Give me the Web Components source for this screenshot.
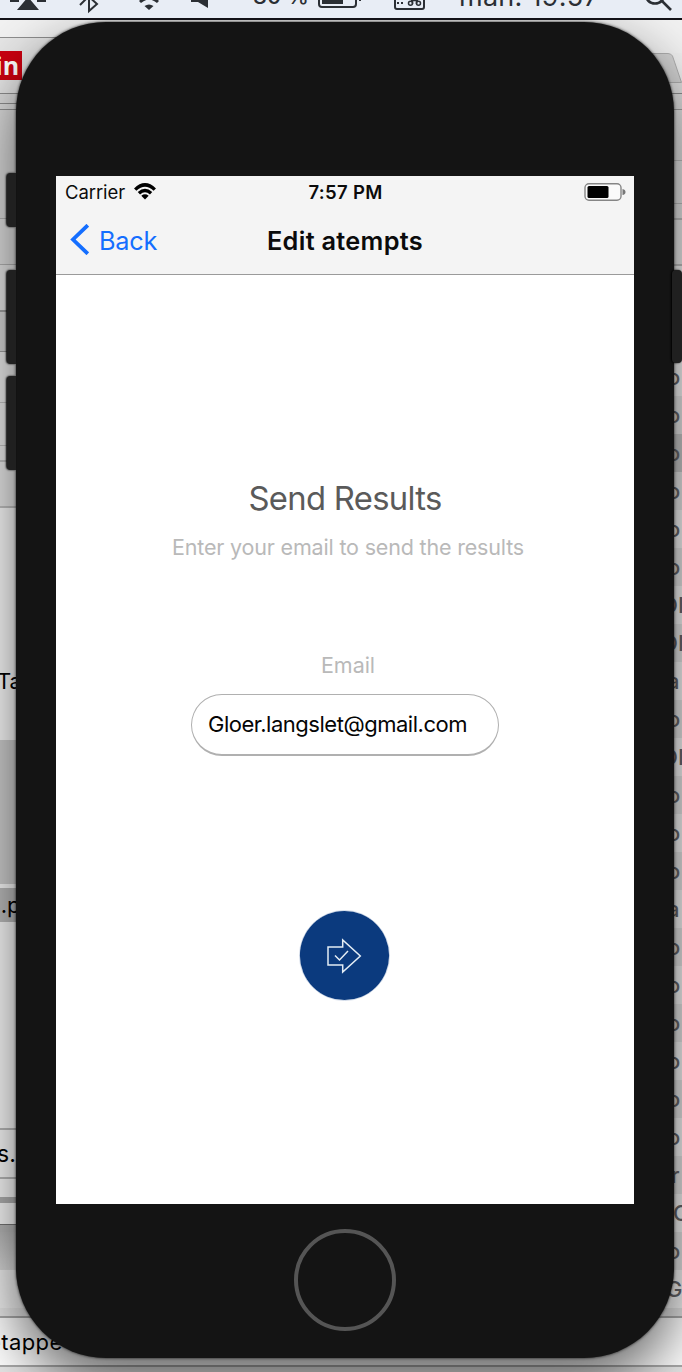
<!DOCTYPE html>
<html lang="en">
<head>
<meta charset="utf-8">
<title>Send Results</title>
<style>
html,body{margin:0;height:100%}
body{font-family:Inter,"Liberation Sans",sans-serif;overflow:hidden;background:#eee}
</style>
</head>
<body>
<desk-top></desk-top>
<script>
const define=(name,html,ready)=>customElements.define(name,class extends HTMLElement{
  constructor(){super();this.attachShadow({mode:'open'}).innerHTML=html;}
  connectedCallback(){if(ready)ready.call(this,this.shadowRoot);}
});

// Text run tracked to an exact width given by the "w" attribute.
define('fit-text',`<style>:host{display:block;white-space:pre;flex:none}span{display:inline-block}</style><span><slot></slot></span>`,
function(root){
  const s=root.querySelector('span'),w=+this.getAttribute('w'),n=this.textContent.length;
  this.style.width=w+'px';
  s.style.letterSpacing=((w-s.getBoundingClientRect().width)/n)+'px';
});

define('menu-bar',`<style>
:host{display:flex;height:18px;overflow:hidden;background:#e8edf5;border-bottom:2px solid #131218;color:#2b2f34;align-items:flex-start}
svg{display:block;flex:none;height:18px;overflow:visible}
fit-text{line-height:30px;margin-top:-19px;font-weight:500}
</style>
<svg width="50" style="margin-left:0" viewBox="0 0 50 18" fill="#2b2f34"><path d="M10 0H19V2H10zM37 0H46V2H37zM28-3 39 10H17z"/></svg>
<svg width="22" style="margin-left:28px" viewBox="0 0 22 18" fill="none" stroke="#2b2f34" stroke-width="2"><path d="M2 5 11-4M11-14V11L19 4 8-6"/></svg>
<svg width="22" style="margin-left:38px" viewBox="0 0 22 18" fill="none" stroke="#2b2f34" stroke-width="3"><path d="M2 2Q11-6 20 2"/><path d="M11 10 6.500 6Q11 3 15.500 6z" fill="#2b2f34" stroke="none"/></svg>
<svg width="18" style="margin-left:30px" viewBox="0 0 18 18" fill="#2b2f34"><path d="M1-4H8L18-12V8L8 2H1z"/></svg>
<fit-text w="56" style="margin-left:45px;font-size:22px;">80 %</fit-text>
<svg width="44" style="margin-left:9px" viewBox="0 0 44 18"><rect x="1" y="-10" width="37" height="17" rx="3" fill="none" stroke="#2b2f34" stroke-width="2"/><rect x="4" y="-7" width="21" height="11" fill="#2b2f34"/><path d="M41-4H43V1H41z" fill="#2b2f34"/></svg>
<svg width="34" style="margin-left:31px" viewBox="0 0 34 18"><rect x="2" y="-12" width="29" height="21" rx="2" fill="none" stroke="#2b2f34" stroke-width="2"/><path d="M4 2H6V4H4zM8 2H10V4H8z" fill="#2b2f34"/><g fill="none" stroke="#2b2f34" stroke-width="1.500"><circle cx="17.500" cy="3.300" r="2"/><circle cx="25.500" cy="3.300" r="2"/><path d="M19.500 4V-3M23.500 4V-3M18 .5H25"/></g></svg>
<fit-text w="140" style="margin-left:32px;font-size:27px;margin-top:-18px;font-weight:400">man. 19:57</fit-text>
<svg width="28" style="margin-left:47px" viewBox="0 0 28 18" fill="none" stroke="#2b2f34" stroke-width="2.600"><circle cx="9" cy="-6" r="9.500"/><path d="M15 0 25 10"/></svg>`);

// Horizontal strips of a background window: [height, fill, content].
const strip=list=>list.map(([h,c,t])=>`<div style="height:${h}px;background:${c}">${t||''}</div>`).join('');
const L='#8e8e8e';
define('left-windows',`<style>
:host{display:flex;flex-direction:column;width:341px;color:#000;font-size:21px}
div{flex:none;display:flex;align-items:center;white-space:pre}
span{display:block;flex:none}
b{font-weight:400}
.red{width:22px;height:29px;background:#cb0010;color:#fff;font:bold 25px/28px "Open Sans",sans-serif;overflow:hidden}
</style>${strip([
[17,'#f2f2f2'],[1,L],[55,'#e6e6e6','<span class="red"><span style="margin-left:-5px">in</span></span>'],[1,L],[9,'#dedede'],[1,L],[5,'#dedede'],[1,L],
[108,'#dcdcdc'],[1,'#b5b5b5'],[45,'#e2e2e2'],[1,'#b5b5b5'],[45,'#e8e8e8'],[2,'#a0a0a0'],[39,'#d8d8d8'],[1,'#a0a0a0'],[50,'#ededed'],[1,'#c4c4c4'],[42,'#ededed'],[1,'#c4c4c4'],[14,'#ededed'],[2,'#c4c4c4'],[44,'#ececec'],[2,'#c4c4c4'],
[151,'#fff'],[44,'#fff','<span style="margin-left:-3px;font-size:22px">Ta</span>'],[37,'#fff'],
[144,'#d3d3d3'],[4,'#fff'],[34,'#c0c0c0','<span style="margin-left:-11px;font-size:22px"><b style="color:#247">s</b>.p</span>'],
[206,'#fff'],[2,'#bdbdbd'],[47,'#fff','<span style="margin-left:-3px;font-size:23px">s.</span>'],[2,'#bdbdbd'],[18,'#fff'],[6,'#b4b4b4'],[21,'#fff'],[1,'#777'],[7,'#bbb'],[38,'linear-gradient(#bdbdbd,#ddd)'],[38,'#f4f4f4'],[8,'#eaeaea'],[2,'#aaa'],[47,'#fff','<span style="margin-left:-12px;font-size:22px;letter-spacing:.4px"><b style="color:#27a">e</b>tappe</span>'],[2,'#aaa'],[5,'#e6e6e6']
])}`);

const letters='o o o o o o DI DI a o DI o o o a o o o o o o r C o G'.split(' ');
define('right-windows',`<style>
:host{display:flex;flex-direction:column;width:341px;color:#66666a;font-size:22px}
div{flex:none;display:flex;align-items:center;white-space:pre}
span{display:block;flex:none;font-weight:500;margin-top:-1px}
svg{display:block;margin-left:300px}
</style>${strip([
[33,'#f2f2f2'],[30,'#f0f0f0','<svg width="41" height="30"><path d="M-50 .5H27Q30 .5 31.500 3L40.500 29.500H-50z" fill="#d3d3d3" stroke="#b0b0b0"/></svg>'],[10,'#e2e2e2'],[1,'#8e8e8e'],[15,'#e0e0e0'],[1,'#a0a0a0'],[50,'#e4e4e4'],[1,'#c0c0c0'],[42,'#e7e7e7'],[1,'#c0c0c0'],[14,'#e7e7e7'],[2,'#c0c0c0'],[44,'#ececec'],[2,'#c0c0c0'],[92,'#f4f4f4']])}
${strip(letters.map((t,i)=>{const x={DI:321,C:332,G:325,r:330}[t]||326;return [38,i==2?'#c8c8c8':i%2?'#e6e6e6':'#f6f6f6',`<span style="margin-left:${x}px">${t}</span>`]}))}
${strip([[8,'#e4e4e4'],[2,'#aaa'],[47,'#fff'],[2,'#aaa'],[5,'#e6e6e6']])}`);

define('nav-header',`<style>
:host{display:block;height:98px;background:#f4f4f4;border-bottom:1px solid #9a9a9a;color:#0b0b0b}
div{display:grid;grid-template-columns:1fr auto 1fr;align-items:center}
.status{height:32px;font-size:18.500px;padding:0 8px 0 9px}
.nav{height:66px;font-size:25.300px;padding:0 14px}
.nav fit-text{margin-top:-2px}
.l{display:flex;align-items:center;gap:9px}.blue{color:#146eff;gap:11px}
svg{display:block}.bat{justify-self:end}
.b{font-weight:600}
</style>
<div class="status">
<span class="l"><fit-text w="60">Carrier</fit-text><svg width="22" height="18" viewBox="0 0 22 18" fill="none" stroke="#000" stroke-width="3.400" style="margin-top:-1px"><path d="M1.200 6.600Q11-2.900 20.800 6.600M4.900 10.300Q11 4.700 17.100 10.300"/><path d="M11 16.500 7.300 12.800Q11 9.900 14.700 12.800z" fill="#000" stroke="none"/></svg></span>
<fit-text w="74" class="b">7:57 PM</fit-text>
<svg class="bat" width="42" height="18" viewBox="0 0 42 18"><rect x="1" y=".8" width="36" height="16.400" rx="4" fill="#fafafa" stroke="#858585" stroke-width="1.400"/><rect x="3.500" y="3" width="21" height="12" rx="1.500"/><path d="M38.500 6Q41.500 6.500 41.500 9T38.500 12z" fill="#777"/></svg>
</div>
<div class="nav">
<span class="l blue"><svg width="19" height="31" viewBox="0 0 19 31" fill="none" stroke="#146eff" stroke-width="3.800" style="margin-top:-3px"><path d="M17.800 1.200 3 15.500 17.800 29.800"/></svg><fit-text w="58" style="margin-left:-1px">Back</fit-text></span>
<fit-text w="156" class="b">Edit atempts</fit-text><span></span>
</div>`);

define('email-field',`<style>
:host{display:flex;flex-direction:column;align-items:center;font-size:22px;line-height:28px}
.label{color:#b9b9b9;margin-left:6px;font-size:21.500px}
.box{box-sizing:border-box;width:308px;height:62px;margin-top:15px;border:1px solid #b0b0b0;border-bottom-width:2px;border-radius:31px;display:flex;align-items:center;padding:0 0 1px 16px;color:#050505}
</style><fit-text class="label" w="54">Email</fit-text><div class="box"><slot></slot></div>`);

define('send-button',`<style>:host{display:block;width:91px;height:91px}svg{display:block;width:91px;height:91px}</style>
<svg viewBox="0 0 91 91" fill="none"><circle cx="45.500" cy="45.500" r="45" stroke="#c5d0e2" stroke-width=".8"/><circle cx="45.500" cy="45.500" r="44.600" fill="#0b3a7e"/><path d="M29 37H43.700V30L61.300 46 43.700 62V55H29z" stroke="#e4edf5" stroke-width="1.500"/><path d="M36 45.500 40.500 50 49 41" stroke="#e4edf5" stroke-width="1.500"/></svg>`);

define('app-screen',`<style>
:host{display:flex;flex-direction:column;width:578px;height:1028px;background:#fff}
main{display:flex;flex-direction:column;align-items:center;padding-top:203px}
.title{font-size:32.800px;line-height:40px;color:#5a5a5a}
.sub{font-size:21.500px;line-height:28px;color:#b9b9b9;margin:15px 0 0 6px}
email-field{margin-top:90px}send-button{margin:154px 1px 0 0}
</style><nav-header></nav-header><main>
<fit-text class="title" w="193">Send Results</fit-text>
<fit-text class="sub" w="352">Enter your email to send the results</fit-text>
<email-field><fit-text w="259">Gloer.langslet@gmail.com</fit-text></email-field>
<send-button></send-button></main>`);

define('phone-frame',`<style>
:host{display:block;width:658px;height:1336px}
.body{box-sizing:border-box;position:relative;width:658px;height:1336px;border-radius:90px;background:#141414;padding:154px 40px 0;box-shadow:0 0 3px rgba(0,0,0,.85),0 25px 60px rgba(0,0,0,.62)}
.home{box-sizing:border-box;width:102px;height:102px;border:4px solid #555;border-radius:50%;margin:25px auto 0}
i{position:absolute;background:#202020;width:9px;left:-9px;border-radius:4px 0 0 4px;box-shadow:-1px 0 2px #000}
.r{left:656px;width:10px;border-radius:4px}
</style><div class="body"><slot></slot><div class="home"></div>
<i style="top:151px;height:54px"></i><i style="top:248px;height:94px"></i><i style="top:354px;height:94px"></i><i class="r" style="top:248px;height:93px"></i></div>`);

define('desk-top',`<style>
:host{display:flex;flex-direction:column;position:relative;width:682px;height:1372px;overflow:hidden}
.wins{display:flex;height:1352px;overflow:hidden}
menu-bar{position:relative;z-index:2;flex:none}
phone-frame{position:absolute;left:16px;top:22px;z-index:1}
</style><menu-bar></menu-bar><div class="wins"><left-windows></left-windows><right-windows></right-windows></div>
<phone-frame><app-screen></app-screen></phone-frame>`);
</script>
</body>
</html>
